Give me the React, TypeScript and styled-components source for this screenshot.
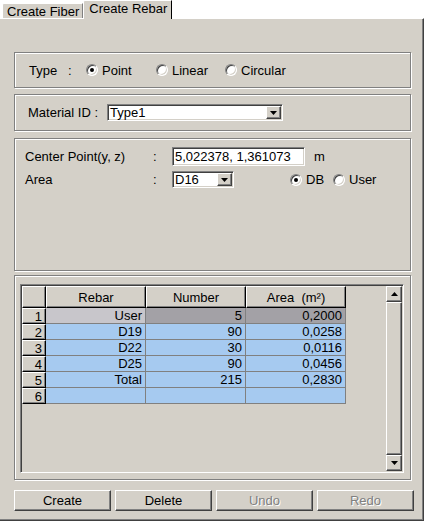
import styled, { createGlobalStyle } from "styled-components";

const Global = createGlobalStyle`
  body {
    margin: 0;
    background: #ffffff;
    font-family: "Liberation Sans", Arial, sans-serif;
    font-size: 12px;
    color: #000000;
  }
`;

const face = "#d4d0c8";

const Window = styled.div({
  width: "425px",
  height: "522px",
  display: "flex",
  flexDirection: "column",
});

const TabStrip = styled.div({
  display: "flex",
  alignItems: "flex-end",
  height: "18px",
  paddingLeft: "2px",
});

const Tab = styled.div<{ $active?: boolean }>`
  box-sizing: border-box;
  height: ${(p) => (p.$active ? "19px" : "15px")};
  margin-bottom: ${(p) => (p.$active ? "-1px" : "0")};
  padding: ${(p) => (p.$active ? "1px 4px 0 5px" : "1px 3px 0 4px")};
  background: ${face};
  border-top: 1px solid #ffffff;
  border-left: 1px solid #ffffff;
  border-right: 1px solid ${(p) => (p.$active ? "#000000" : "#808080")};
  border-top-left-radius: 2px;
  position: relative;
  z-index: 1;
  white-space: nowrap;
  line-height: 14px;
  font-size: 13px;
`;

const Panel = styled.div({
  boxSizing: "border-box",
  width: "424px",
  height: "503px",
  background: face,
  borderTop: "1px solid #ffffff",
  borderRight: "1px solid #404040",
  borderBottom: "1px solid #404040",
  boxShadow: "inset -1px -1px 0 #808080",
  padding: "33px 0 0 14px",
  display: "flex",
  flexDirection: "column",
});

const Group = styled.div<{ $h: number; $gap?: number }>`
  box-sizing: border-box;
  width: 397px;
  height: ${(p) => p.$h}px;
  margin-bottom: ${(p) => p.$gap ?? 6}px;
  border: 1px solid #808080;
  box-shadow: inset 1px 1px 0 #ffffff, 1px 1px 0 #ffffff;
`;

const Row = styled.div<{ $pl: number }>`
  display: flex;
  align-items: center;
  height: 100%;
  padding-left: ${(p) => p.$pl}px;
`;

const Text = styled.span<{ $w?: number; $ml?: number }>`
  display: inline-block;
  white-space: pre;
  width: ${(p) => (p.$w ? `${p.$w}px` : "auto")};
  margin-left: ${(p) => p.$ml ?? 0}px;
  font-size: 13px;
`;

const RadioItem = styled.label<{ $w?: number }>`
  display: flex;
  align-items: center;
  gap: 4px;
  width: ${(p) => (p.$w ? `${p.$w}px` : "auto")};
  font-size: 13px;
`;

const RadioCircle = styled.span<{ $on?: boolean }>`
  box-sizing: border-box;
  width: 12px;
  height: 12px;
  border-radius: 50%;
  background: #ffffff;
  border: 1px solid;
  border-color: #808080 #ffffff #ffffff #808080;
  box-shadow: inset 1px 1px 0 #404040, inset -1px -1px 0 ${face};
  display: flex;
  align-items: center;
  justify-content: center;
  &::after {
    content: "";
    width: 4px;
    height: 4px;
    border-radius: 50%;
    background: ${(p) => (p.$on ? "#000000" : "transparent")};
  }
`;

const Radio = ({ label, on, w }: { label: string; on?: boolean; w?: number }) => (
  <RadioItem $w={w}>
    <RadioCircle $on={on} />
    {label}
  </RadioItem>
);

const Sunken = styled.div<{ $w: number; $h: number; $ml?: number }>`
  box-sizing: border-box;
  width: ${(p) => p.$w}px;
  height: ${(p) => p.$h}px;
  margin-left: ${(p) => p.$ml ?? 0}px;
  background: #ffffff;
  border: 1px solid;
  border-color: #808080 #ffffff #ffffff #808080;
  box-shadow: inset 1px 1px 0 #404040, inset -1px -1px 0 ${face};
  display: flex;
  align-items: center;
  padding: 0 1px 0 2px;
  font-size: 13px;
  white-space: nowrap;
  overflow: hidden;
`;

const ComboText = styled.span({
  flex: 1,
  lineHeight: "13px",
});

const ArrowBtn = styled.span<{ $h: number }>`
  box-sizing: border-box;
  width: 15px;
  height: ${(p) => p.$h}px;
  background: ${face};
  border: 1px solid;
  border-color: #ffffff #404040 #404040 #ffffff;
  box-shadow: inset -1px -1px 0 #808080;
  display: flex;
  align-items: center;
  justify-content: center;
`;

const Arrow = ({ up }: { up?: boolean }) => (
  <svg width="7" height="4" viewBox="0 0 7 4">
    <path d={up ? "M3.5 0 L7 4 L0 4 Z" : "M0 0 L7 0 L3.5 4 Z"} fill="#000" />
  </svg>
);

const FieldGrid = styled.div({
  display: "grid",
  gridTemplateColumns: "128px 19px auto",
  gridTemplateRows: "19px 17px",
  rowGap: "5px",
  alignItems: "center",
  padding: "8px 0 0 10px",
});

const Inline = styled.div<{ $ml?: number }>`
  display: flex;
  align-items: center;
  margin-left: ${(p) => p.$ml ?? 0}px;
`;

const GridFrame = styled.div({
  boxSizing: "border-box",
  width: "384px",
  height: "189px",
  margin: "8px 0 0 5px",
  border: "1px solid",
  borderColor: "#808080 #ffffff #ffffff #808080",
  boxShadow: `inset 1px 1px 0 #404040, inset -1px -1px 0 ${face}`,
  padding: "1px",
  display: "flex",
  justifyContent: "space-between",
});

const Table = styled.div({
  display: "grid",
  gridTemplateColumns: "24px repeat(3, 100px)",
  gridTemplateRows: "22px repeat(6, 16px)",
  alignSelf: "flex-start",
});

const HeadCell = styled.div<{ $right?: boolean }>`
  box-sizing: border-box;
  background: ${face};
  border: 1px solid;
  border-color: #ffffff #000000 #000000 #ffffff;
  box-shadow: inset -1px -1px 0 #808080;
  display: flex;
  align-items: center;
  justify-content: ${(p) => (p.$right ? "flex-end" : "center")};
  padding-right: ${(p) => (p.$right ? "3px" : "0")};
  font-size: 13px;
  white-space: pre;
`;

const Cell = styled.div<{ $bg: string }>`
  box-sizing: border-box;
  background: ${(p) => p.$bg};
  border-right: 1px solid #808080;
  border-bottom: 1px solid #808080;
  display: flex;
  align-items: center;
  justify-content: flex-end;
  padding-right: 3px;
  font-size: 13px;
`;

const ScrollBar = styled.div({
  width: "16px",
  display: "flex",
  flexDirection: "column",
});

const ScrollBtn = styled.div({
  boxSizing: "border-box",
  height: "16px",
  background: face,
  border: "1px solid",
  borderColor: "#ffffff #404040 #404040 #ffffff",
  boxShadow: "inset -1px -1px 0 #808080",
  display: "flex",
  alignItems: "center",
  justifyContent: "center",
});

const Thumb = styled.div({
  flex: 1,
  boxSizing: "border-box",
  background: face,
  border: "1px solid",
  borderColor: "#ffffff #404040 #404040 #ffffff",
  boxShadow: "inset -1px -1px 0 #808080",
});

const ButtonRow = styled.div({
  display: "flex",
  gap: "4px",
});

const Button = styled.button<{ $disabled?: boolean }>`
  box-sizing: border-box;
  width: 97px;
  height: 21px;
  padding: 0;
  background: ${face};
  border: 1px solid;
  border-color: #ffffff #404040 #404040 #ffffff;
  box-shadow: inset -1px -1px 0 #808080;
  font-family: "Liberation Sans", Arial, sans-serif;
  font-size: 13px;
  color: ${(p) => (p.$disabled ? "#808080" : "#000000")};
  text-shadow: ${(p) => (p.$disabled ? "1px 1px 0 #ffffff" : "none")};
`;

const rows = [
  { n: "1", rebar: "User", num: "5", area: "0,2000", first: true },
  { n: "2", rebar: "D19", num: "90", area: "0,0258" },
  { n: "3", rebar: "D22", num: "30", area: "0,0116" },
  { n: "4", rebar: "D25", num: "90", area: "0,0456" },
  { n: "5", rebar: "Total", num: "215", area: "0,2830" },
  { n: "6", rebar: "", num: "", area: "" },
];

const blue = "#a6caf0";

export default function App() {
  return (
    <Window>
      <Global />
      <TabStrip>
        <Tab>Create Fiber</Tab>
        <Tab $active>Create Rebar</Tab>
      </TabStrip>
      <Panel>
        <Group $h={36}>
          <Row $pl={14}>
            <Text $w={39}>Type</Text>
            <Text $w={18}>:</Text>
            <Radio label="Point" on w={70} />
            <Radio label="Linear" w={69} />
            <Radio label="Circular" />
          </Row>
        </Group>
        <Group $h={37} $gap={7}>
          <Row $pl={13}>
            <Text $w={79}>Material ID :</Text>
            <Sunken $w={176} $h={17}>
              <ComboText>Type1</ComboText>
              <ArrowBtn $h={13}>
                <Arrow />
              </ArrowBtn>
            </Sunken>
          </Row>
        </Group>
        <Group $h={133} $gap={4}>
          <FieldGrid>
            <Text>Center Point(y, z)</Text>
            <Text>:</Text>
            <Inline>
              <Sunken $w={133} $h={19}>5,022378, 1,361073</Sunken>
              <Text $ml={9}>m</Text>
            </Inline>
            <Text>Area</Text>
            <Text>:</Text>
            <Inline>
              <Sunken $w={62} $h={17}>
                <ComboText>D16</ComboText>
                <ArrowBtn $h={13}>
                  <Arrow />
                </ArrowBtn>
              </Sunken>
              <Inline $ml={56}>
                <Radio label="DB" on w={43} />
                <Radio label="User" />
              </Inline>
            </Inline>
          </FieldGrid>
        </Group>
        <Group $h={205} $gap={10}>
          <GridFrame>
            <Table>
              <HeadCell />
              <HeadCell>Rebar</HeadCell>
              <HeadCell>Number</HeadCell>
              <HeadCell>{"Area  (m²)"}</HeadCell>
              {rows.map((r) => [
                <HeadCell key={`h${r.n}`} $right>
                  {r.n}
                </HeadCell>,
                <Cell key={`r${r.n}`} $bg={r.first ? "#c8c6cb" : blue}>
                  {r.rebar}
                </Cell>,
                <Cell key={`n${r.n}`} $bg={r.first ? "#a3a1a6" : blue}>
                  {r.num}
                </Cell>,
                <Cell key={`a${r.n}`} $bg={r.first ? "#a3a1a6" : blue}>
                  {r.area}
                </Cell>,
              ])}
            </Table>
            <ScrollBar>
              <ScrollBtn>
                <Arrow up />
              </ScrollBtn>
              <Thumb />
              <ScrollBtn>
                <Arrow />
              </ScrollBtn>
            </ScrollBar>
          </GridFrame>
        </Group>
        <ButtonRow>
          <Button>Create</Button>
          <Button>Delete</Button>
          <Button $disabled>Undo</Button>
          <Button $disabled>Redo</Button>
        </ButtonRow>
      </Panel>
    </Window>
  );
}
